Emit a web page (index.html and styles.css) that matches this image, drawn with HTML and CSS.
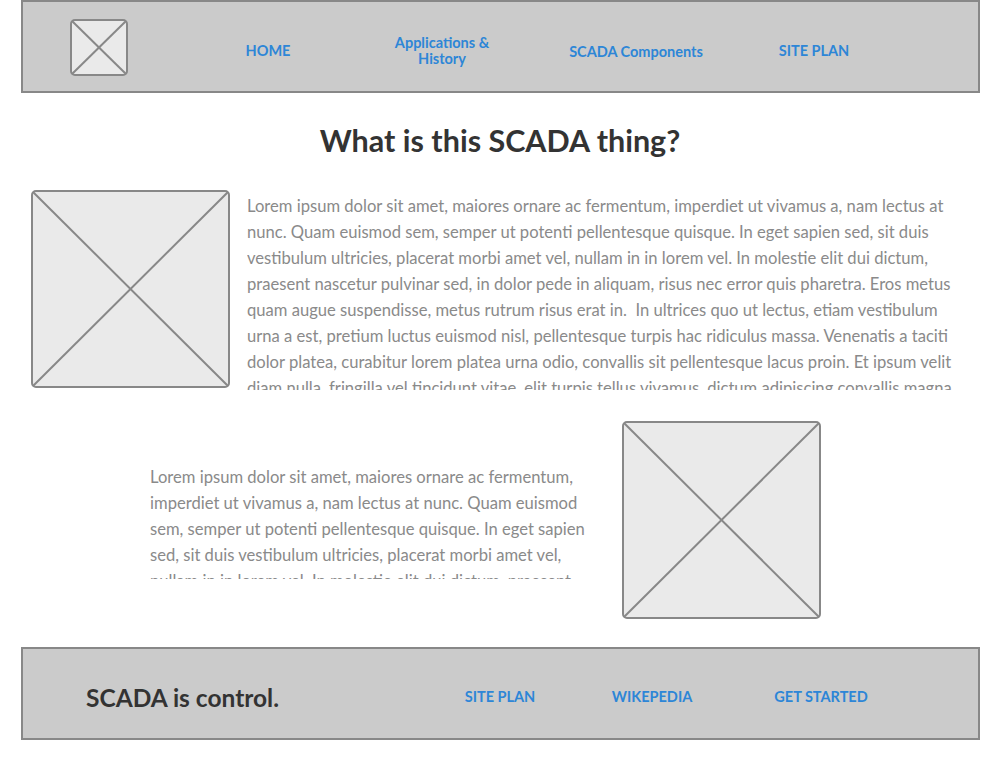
FILE: index.html
```html
<!DOCTYPE html>
<html lang="en">
<head>
<meta charset="utf-8">
<title>What is this SCADA thing?</title>
<link rel="stylesheet" href="styles.css">
</head>
<body>
<header class="topbar">
  <svg class="logo" width="58" height="57" viewBox="0 0 58 57">
    <rect x="1" y="1" width="56" height="55" rx="4" fill="#eaeaea" stroke="#888" stroke-width="2"/>
    <line x1="2" y1="2" x2="56" y2="55" stroke="#888" stroke-width="2"/>
    <line x1="56" y1="2" x2="2" y2="55" stroke="#888" stroke-width="2"/>
  </svg>
  <nav class="topnav">
    <a class="nav-link w1" href="#">HOME</a>
    <a class="nav-link w2" href="#">Applications &amp;<br>History</a>
    <a class="nav-link w3 low" href="#">SCADA Components</a>
    <a class="nav-link w4" href="#">SITE PLAN</a>
  </nav>
</header>

<main>
  <h1 class="title">What is this SCADA thing?</h1>

  <section class="row row-one">
    <svg class="placeholder" width="199" height="198" viewBox="0 0 199 198">
      <rect x="1" y="1" width="197" height="196" rx="4" fill="#eaeaea" stroke="#888" stroke-width="2"/>
      <line x1="2" y1="2" x2="197" y2="196" stroke="#888" stroke-width="2"/>
      <line x1="197" y1="2" x2="2" y2="196" stroke="#888" stroke-width="2"/>
    </svg>
    <p class="lorem lorem-one">Lorem ipsum dolor sit amet, maiores ornare ac fermentum, imperdiet ut vivamus a, nam lectus at nunc. Quam euismod sem, semper ut potenti pellentesque quisque. In eget sapien sed, sit duis vestibulum ultricies, placerat morbi amet vel, nullam in in lorem vel. In molestie elit dui dictum, praesent nascetur pulvinar sed, in dolor pede in aliquam, risus nec error quis pharetra. Eros metus quam augue suspendisse, metus rutrum risus erat in.&nbsp; In ultrices quo ut lectus, etiam vestibulum urna a est, pretium luctus euismod nisl, pellentesque turpis hac ridiculus massa. Venenatis a taciti dolor platea, curabitur lorem platea urna odio, convallis sit pellentesque lacus proin. Et ipsum velit diam nulla, fringilla vel tincidunt vitae, elit turpis tellus vivamus, dictum adipiscing convallis magna.</p>
  </section>

  <section class="row row-two">
    <p class="lorem lorem-two">Lorem ipsum dolor sit amet, maiores ornare ac fermentum, imperdiet ut vivamus a, nam lectus at nunc. Quam euismod sem, semper ut potenti pellentesque quisque. In eget sapien sed, sit duis vestibulum ultricies, placerat morbi amet vel, nullam in in lorem vel. In molestie elit dui dictum, praesent nascetur pulvinar sed, in dolor pede in aliquam.</p>
    <svg class="placeholder" width="199" height="198" viewBox="0 0 199 198">
      <rect x="1" y="1" width="197" height="196" rx="4" fill="#eaeaea" stroke="#888" stroke-width="2"/>
      <line x1="2" y1="2" x2="197" y2="196" stroke="#888" stroke-width="2"/>
      <line x1="197" y1="2" x2="2" y2="196" stroke="#888" stroke-width="2"/>
    </svg>
  </section>
</main>

<footer class="bottombar">
  <div class="tagline">SCADA is control.</div>
  <nav class="footnav">
    <a class="nav-link f1" href="#">SITE PLAN</a>
    <a class="nav-link f2" href="#">WIKEPEDIA</a>
    <a class="nav-link f3" href="#">GET STARTED</a>
  </nav>
</footer>
</body>
</html>
```

FILE: styles.css
```css
* { box-sizing: border-box; }

body {
  margin: 0;
  width: 1000px;
  background: #ffffff;
  font-family: Lato, "Open Sans", sans-serif;
  color: #333333;
}

.topbar {
  margin: 0 20px 0 21px;
  height: 93px;
  background: #cbcbcb;
  border: 2px solid #888888;
  display: flex;
  align-items: flex-start;
  justify-content: space-between;
  padding: 17px 93px 0 47px;
}

.logo { display: block; flex: none; }

.topnav {
  display: flex;
  align-items: center;
  height: 63px;
}

.nav-link {
  display: block;
  text-align: center;
  color: #2d86d7;
  text-decoration: none;
  font-weight: 700;
  font-size: 14.5px;
  line-height: 16px;
}

.w1 { width: 174px; }
.w2 { width: 174px; }
.w3 { width: 214px; }
.w4 { width: 142px; }
.low { padding-top: 2px; }

.title {
  margin: 29px 0 0;
  text-align: center;
  font-size: 30.5px;
  line-height: 36px;
  font-weight: 700;
  color: #333333;
}

.row {
  display: flex;
  align-items: flex-start;
}

.placeholder { display: block; flex: none; }

.row-one {
  margin-top: 32px;
  padding-left: 31px;
  gap: 17px;
}

.lorem {
  margin: 0;
  font-size: 16.6px;
  line-height: 26px;
  color: #8a8a8a;
  overflow: hidden;
}

.lorem-one {
  margin-top: 3px;
  width: 722px;
  height: 197px;
}

.row-two {
  margin-top: 31px;
  padding-left: 150px;
  gap: 32px;
}

.lorem-two {
  width: 440px;
  height: 115px;
  margin-top: 43px;
}

.bottombar {
  margin: 28px 20px 0 21px;
  height: 93px;
  background: #cbcbcb;
  border: 2px solid #888888;
  display: flex;
  align-items: center;
  justify-content: space-between;
  padding: 7px 64px 0 63px;
}

.tagline {
  font-size: 24.5px;
  font-weight: 700;
  color: #333333;
}

.footnav { display: flex; align-items: center; }

.f1 { width: 152px; }
.f2 { width: 152px; }
.f3 { width: 186px; }
```
